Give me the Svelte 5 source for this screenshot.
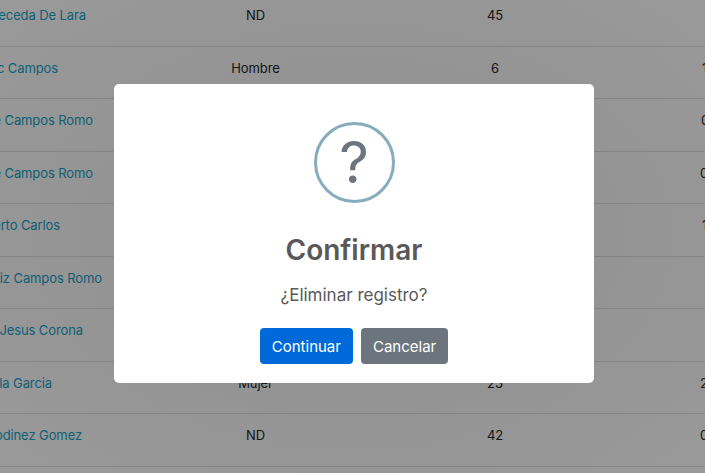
<script>
  const rows = [
    { name: "Maria Ceceda De Lara", end: 86, sex: "ND", age: "45", val: "", at: 0 },
    { name: "Isaac Campos", end: 58, sex: "Hombre", age: "6", val: "1.0", at: 702 },
    { name: "Jose Campos Romo", end: 93, sex: "", age: "", val: "0.5", at: 701 },
    { name: "Jose Campos Romo", end: 93, sex: "", age: "", val: "0.5", at: 700 },
    { name: "Roberto Carlos", end: 60, sex: "", age: "", val: "1.0", at: 702 },
    { name: "Ortiz Campos Romo", end: 102, sex: "", age: "", val: "", at: 0 },
    { name: "Juan Jesus Corona", end: 83, sex: "", age: "", val: "", at: 0 },
    { name: "Paula Garcia", end: 52, sex: "Mujer", age: "23", val: "2.0", at: 700 },
    { name: "Rodinez Gomez", end: 82, sex: "ND", age: "42", val: "0.5", at: 700 },
    { name: "", end: 0, sex: "", age: "", val: "", at: 0 }
  ];
</script>

<div class="page">
  <div class="table">
    {#each rows as row}
      <div class="row">
        <div class="name" style="padding-right: {140 - row.end}px"><span>{row.name}</span></div>
        <div class="cell">{row.sex}</div>
        <div class="cell">{row.age}</div>
        <div class="val" style="padding-left: {row.at - 619}px">{row.val}</div>
      </div>
    {/each}
  </div>

  <div class="backdrop">
    <div class="modal">
      <svg class="icon" width="81" height="81" viewBox="0 0 81 81">
        <circle cx="40.5" cy="40.5" r="39" fill="none" stroke="#87adbd" stroke-width="3" />
      </svg>
      <span class="mark">?</span>
      <h2>Confirmar</h2>
      <p>¿Eliminar registro?</p>
      <div class="actions">
        <button class="primary">Continuar</button>
        <button class="secondary">Cancelar</button>
      </div>
    </div>
  </div>
</div>

<style>
  :global(body) {
    margin: 0;
  }

  .page {
    width: 705px;
    height: 473px;
    overflow: hidden;
    position: relative;
    background: #fff;
    font-family: Inter, "Liberation Sans", sans-serif;
    font-size: 13px;
    color: #212529;
  }

  .table {
    margin-top: -6px;
  }

  .row {
    display: grid;
    grid-template-columns: 140px 231px 248px 86px;
    height: 52.5px;
    box-sizing: border-box;
    border-bottom: 1px solid #dee2e6;
    line-height: 20px;
    padding-top: 11px;
    letter-spacing: -0.1px;
  }

  .name {
    display: flex;
    justify-content: flex-end;
    overflow: hidden;
    white-space: nowrap;
    color: #17a2c8;
  }

  .cell {
    text-align: center;
  }

  .val {
    white-space: nowrap;
    overflow: hidden;
  }

  .backdrop {
    position: absolute;
    inset: 0;
    background: radial-gradient(ellipse at center, rgba(0, 0, 0, 0.44) 0%, rgba(0, 0, 0, 0.4) 100%);
  }

  .modal {
    position: absolute;
    left: 114px;
    top: 84px;
    width: 480px;
    height: 299px;
    box-sizing: border-box;
    padding-top: 38px;
    background: #fff;
    border-radius: 5px;
    display: flex;
    flex-direction: column;
    align-items: center;
    color: #595959;
  }

  .icon {
    display: block;
  }

  .mark {
    position: absolute;
    top: 38px;
    left: 0;
    right: 0;
    height: 81px;
    line-height: 81px;
    text-align: center;
    font-size: 58px;
    color: #6c757d;
  }

  h2 {
    margin: 29px 0 0;
    font-size: 28px;
    line-height: 36px;
    font-weight: 600;
  }

  p {
    margin: 15px 0 0;
    font-size: 17px;
    line-height: 24px;
  }

  .actions {
    display: flex;
    gap: 8px;
    margin-top: 21px;
  }

  button {
    border: none;
    border-radius: 4px;
    height: 36px;
    padding: 0 12px;
    font: inherit;
    font-size: 15px;
    color: #fff;
  }

  .primary {
    background: #0069d9;
  }

  .secondary {
    background: #6c757d;
  }
</style>
